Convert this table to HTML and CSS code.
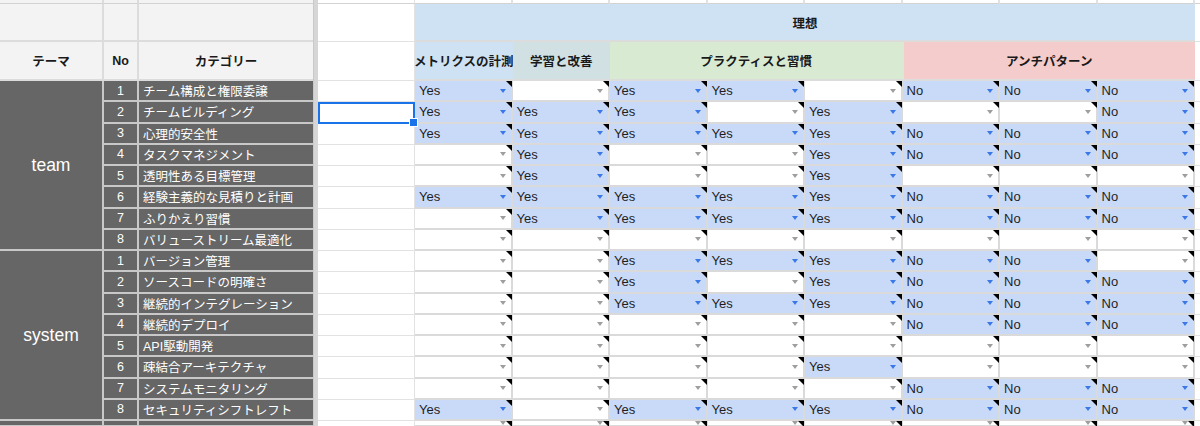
FILE: index.html
```html
<!DOCTYPE html>
<html lang="ja">
<head>
<meta charset="utf-8">
<title>理想 シート</title>
<link rel="stylesheet" href="styles.css">
</head>
<body>
<div class="sheet">
  <div class="divider"></div>

  <!-- top partial row -->
  <div class="g top"></div><div class="g top"></div><div class="g top"></div><div class="w top"></div>
  <div class="w top dt"></div><div class="w top dt"></div><div class="w top dt"></div><div class="w top dt"></div>
  <div class="w top dt"></div><div class="w top dt"></div><div class="w top dt"></div><div class="w top dt"></div>
  <div class="w top e"></div>

  <!-- header row 1 -->
  <div class="g"></div><div class="g"></div><div class="g"></div><div class="w"></div>
  <div class="h blue ideal">理想</div>
  <div class="w e"></div>

  <!-- header row 2 -->
  <div class="g">テーマ</div><div class="g">No</div><div class="g">カテゴリー</div><div class="w"></div>
  <div class="h blue">メトリクスの計測</div>
  <div class="h teal">学習と改善</div>
  <div class="h green span3">プラクティスと習慣</div>
  <div class="h red span3">アンチパターン</div>
  <div class="w e"></div>

  <!-- team -->
  <div class="k theme">team</div>
  <div class="k num">1</div><div class="k cat">チーム構成と権限委譲</div><div class="w"></div>
  <div class="d f">Yes</div><div class="d"></div><div class="d f">Yes</div><div class="d f">Yes</div><div class="d"></div><div class="d f">No</div><div class="d f">No</div><div class="d f">No</div>
  <div class="w e"></div>

  <div class="k num">2</div><div class="k cat">チームビルディング</div><div class="w sel"></div>
  <div class="d f">Yes</div><div class="d f">Yes</div><div class="d f">Yes</div><div class="d"></div><div class="d f">Yes</div><div class="d"></div><div class="d"></div><div class="d f">No</div>
  <div class="w e"></div>

  <div class="k num">3</div><div class="k cat">心理的安全性</div><div class="w"></div>
  <div class="d f">Yes</div><div class="d f">Yes</div><div class="d f">Yes</div><div class="d f">Yes</div><div class="d f">Yes</div><div class="d f">No</div><div class="d f">No</div><div class="d f">No</div>
  <div class="w e"></div>

  <div class="k num">4</div><div class="k cat">タスクマネジメント</div><div class="w"></div>
  <div class="d"></div><div class="d f">Yes</div><div class="d"></div><div class="d"></div><div class="d f">Yes</div><div class="d f">No</div><div class="d f">No</div><div class="d f">No</div>
  <div class="w e"></div>

  <div class="k num">5</div><div class="k cat">透明性ある目標管理</div><div class="w"></div>
  <div class="d"></div><div class="d f">Yes</div><div class="d"></div><div class="d"></div><div class="d f">Yes</div><div class="d"></div><div class="d"></div><div class="d"></div>
  <div class="w e"></div>

  <div class="k num">6</div><div class="k cat">経験主義的な見積りと計画</div><div class="w"></div>
  <div class="d f">Yes</div><div class="d f">Yes</div><div class="d f">Yes</div><div class="d f">Yes</div><div class="d f">Yes</div><div class="d f">No</div><div class="d f">No</div><div class="d f">No</div>
  <div class="w e"></div>

  <div class="k num">7</div><div class="k cat">ふりかえり習慣</div><div class="w"></div>
  <div class="d"></div><div class="d f">Yes</div><div class="d f">Yes</div><div class="d f">Yes</div><div class="d f">Yes</div><div class="d f">No</div><div class="d f">No</div><div class="d f">No</div>
  <div class="w e"></div>

  <div class="k num">8</div><div class="k cat">バリューストリーム最適化</div><div class="w"></div>
  <div class="d"></div><div class="d"></div><div class="d"></div><div class="d"></div><div class="d"></div><div class="d"></div><div class="d"></div><div class="d"></div>
  <div class="w e"></div>

  <!-- system -->
  <div class="k theme">system</div>
  <div class="k num">1</div><div class="k cat">バージョン管理</div><div class="w"></div>
  <div class="d"></div><div class="d"></div><div class="d f">Yes</div><div class="d f">Yes</div><div class="d f">Yes</div><div class="d f">No</div><div class="d f">No</div><div class="d"></div>
  <div class="w e"></div>

  <div class="k num">2</div><div class="k cat">ソースコードの明確さ</div><div class="w"></div>
  <div class="d"></div><div class="d"></div><div class="d f">Yes</div><div class="d"></div><div class="d f">Yes</div><div class="d f">No</div><div class="d f">No</div><div class="d f">No</div>
  <div class="w e"></div>

  <div class="k num">3</div><div class="k cat">継続的インテグレーション</div><div class="w"></div>
  <div class="d"></div><div class="d"></div><div class="d f">Yes</div><div class="d f">Yes</div><div class="d f">Yes</div><div class="d f">No</div><div class="d f">No</div><div class="d f">No</div>
  <div class="w e"></div>

  <div class="k num">4</div><div class="k cat">継続的デプロイ</div><div class="w"></div>
  <div class="d"></div><div class="d"></div><div class="d"></div><div class="d"></div><div class="d"></div><div class="d f">No</div><div class="d f">No</div><div class="d f">No</div>
  <div class="w e"></div>

  <div class="k num">5</div><div class="k cat">API駆動開発</div><div class="w"></div>
  <div class="d"></div><div class="d"></div><div class="d"></div><div class="d"></div><div class="d"></div><div class="d"></div><div class="d"></div><div class="d"></div>
  <div class="w e"></div>

  <div class="k num">6</div><div class="k cat">疎結合アーキテクチャ</div><div class="w"></div>
  <div class="d"></div><div class="d"></div><div class="d"></div><div class="d"></div><div class="d f">Yes</div><div class="d"></div><div class="d"></div><div class="d"></div>
  <div class="w e"></div>

  <div class="k num">7</div><div class="k cat">システムモニタリング</div><div class="w"></div>
  <div class="d"></div><div class="d"></div><div class="d"></div><div class="d"></div><div class="d"></div><div class="d f">No</div><div class="d f">No</div><div class="d f">No</div>
  <div class="w e"></div>

  <div class="k num">8</div><div class="k cat">セキュリティシフトレフト</div><div class="w"></div>
  <div class="d f">Yes</div><div class="d"></div><div class="d f">Yes</div><div class="d f">Yes</div><div class="d f">Yes</div><div class="d f">No</div><div class="d f">No</div><div class="d f">No</div>
  <div class="w e"></div>

  <!-- bottom partial row -->
  <div class="k"></div><div class="k num"></div><div class="k cat"></div><div class="w"></div>
  <div class="d"></div><div class="d"></div><div class="d"></div><div class="d"></div><div class="d"></div><div class="d"></div><div class="d"></div><div class="d"></div>
  <div class="w e"></div>
</div>
</body>
</html>
```

FILE: styles.css
```css
* { box-sizing: border-box; }
html, body { margin: 0; padding: 0; }
body {
  width: 1200px;
  height: 426px;
  overflow: hidden;
  background: #fff;
  font-family: "Liberation Sans", "Noto Sans CJK JP", sans-serif;
  color: #1f1f1f;
}

.sheet {
  display: grid;
  grid-template-columns: 104px 35px 174px 5px 97px repeat(8, 97.5px) 1fr;
  grid-template-rows: 4px 38px 39px repeat(16, 21.25px) 1fr;
  height: 426px;
}

.sheet > div {
  min-width: 0;
}

.divider {
  grid-column: 4;
  grid-row: 1 / -1;
  background: #d6d6d6;
  border-left: 1px solid #c9c9c9;
}

/* gray header cells (A-C) */
.g {
  background: #f3f3f3;
  border-right: 2px solid #dcdcdc;
  border-bottom: 2px solid #dcdcdc;
  display: flex;
  align-items: center;
  justify-content: center;
  font-size: 12.5px;
  font-weight: 700;
  color: #1a1a1a;
}
.g + .g + .g { border-right: none; }

/* plain white cells */
.w {
  background: #fff;
  border-right: 1px solid #e2e2e2;
  border-bottom: 1px solid #e2e2e2;
}
.w.e { border-right: none; }
.top { border-bottom: 1px solid #d2d2d2; }
.top.dt { border-right: 2px solid #e2e2e2; }

/* colored headers */
.h {
  display: flex;
  align-items: center;
  justify-content: center;
  overflow: hidden;
  white-space: nowrap;
  font-size: 12.5px;
  font-weight: 700;
  color: #1a1a1a;
  border-bottom: 2px solid #dcdcdc;
}
.ideal { grid-column: span 8; }
.span3 { grid-column: span 3; }
.blue { background: #cfe2f3; }
.teal { background: #d0e0e3; }
.green { background: #d9ead3; }
.red { background: #f4cccc; border-left: 1px solid #eadede; }

/* dark label cells */
.k {
  background: #666666;
  color: #fff;
  border-right: 2px solid #c8c8c8;
  border-bottom: 2px solid #c8c8c8;
  display: flex;
  align-items: center;
  font-size: 12.5px;
  white-space: nowrap;
  overflow: hidden;
}
.k.num { justify-content: center; }
.k.cat { justify-content: flex-start; padding-left: 4px; border-right: none; }
.k.theme {
  grid-row: span 8;
  justify-content: center;
  font-size: 17.5px;
}

/* data dropdown cells */
.d {
  position: relative;
  background: #fff;
  border-right: 2px solid #dadada;
  border-bottom: 2px solid #dadada;
  display: flex;
  align-items: center;
  padding: 0 5px 0 4px;
  font-size: 13px;
  color: #1f1f1f;
  white-space: nowrap;
}
.d::before {
  content: "";
  position: absolute;
  top: 0;
  right: -1px;
  width: 0;
  height: 0;
  border-top: 6px solid #000;
  border-left: 6px solid transparent;
}
.d::after {
  content: "";
  margin-left: auto;
  width: 0;
  height: 0;
  border-left: 3.5px solid transparent;
  border-right: 3.5px solid transparent;
  border-top: 4px solid #9e9e9e;
}
.d.f { background: #c9daf8; }
.d.f::after { border-top-color: #3b78e7; }

/* selected cell */
.sel { position: relative; z-index: 2; }
.sel::before {
  content: "";
  position: absolute;
  top: 0;
  left: 0;
  right: -1px;
  bottom: -1px;
  border: 2px solid #1a73e8;
}
.sel::after {
  content: "";
  position: absolute;
  right: -4px;
  bottom: -4px;
  width: 7px;
  height: 7px;
  background: #1a73e8;
  border: 1px solid #fff;
}
```
